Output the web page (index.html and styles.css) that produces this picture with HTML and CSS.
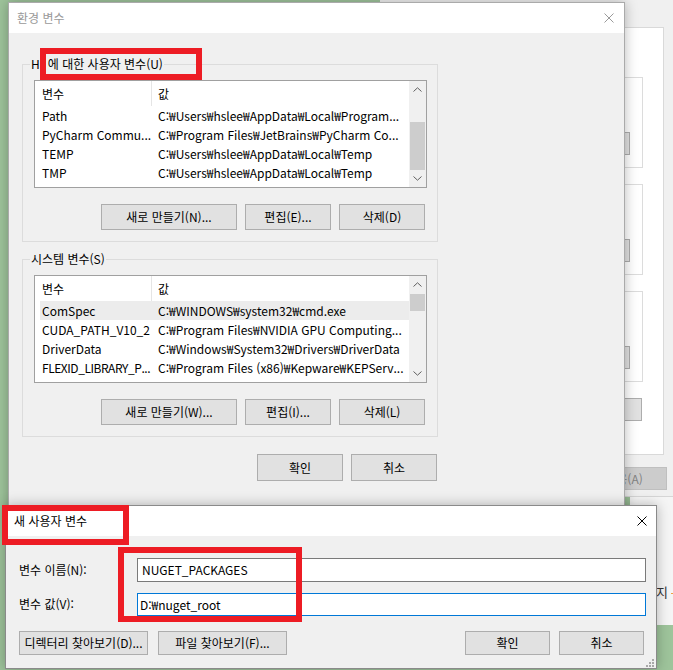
FILE: index.html
```html
<!DOCTYPE html>
<html lang="ko">
<head>
<meta charset="utf-8">
<title>환경 변수</title>
<link rel="stylesheet" href="styles.css">
</head>
<body>
<div class="desktop">

  <div class="win bgwin">
    <div class="tabpanel">
      <div class="gbox"><span class="btn small"></span></div>
      <div class="gbox"><span class="btn small"></span></div>
      <div class="gbox"><span class="btn small"></span></div>
      <span class="btn wide">환경 변수(N)...</span>
    </div>
    <span class="btn apply">적용(A)</span>
  </div>

  <div class="win explorer">
    <span class="ex-text">지</span><span class="ex-dash"></span>
  </div>

  <div class="win dialog main">
    <div class="titlebar inactive">
      <span class="title">환경 변수</span>
      <svg class="close" width="10" height="10" viewBox="0 0 10 10"><path d="M0.5 0.5L9.5 9.5M9.5 0.5L0.5 9.5" stroke="#9a9a9a" stroke-width="1" fill="none"/></svg>
    </div>
    <div class="main-body">
      <fieldset class="group first">
        <legend>H<span class="hidden-name"></span>에 대한 사용자 변수(U)</legend>
        <div class="list">
          <div class="list-main">
            <div class="list-head"><span class="c1">변수</span><span class="c2">값</span></div>
            <div class="row"><span class="c1">Path</span><span class="c2">C:₩Users₩hslee₩AppData₩Local₩Program...</span></div>
            <div class="row"><span class="c1">PyCharm Commu...</span><span class="c2">C:₩Program Files₩JetBrains₩PyCharm Co...</span></div>
            <div class="row"><span class="c1">TEMP</span><span class="c2">C:₩Users₩hslee₩AppData₩Local₩Temp</span></div>
            <div class="row"><span class="c1">TMP</span><span class="c2">C:₩Users₩hslee₩AppData₩Local₩Temp</span></div>
          </div>
          <div class="vscroll">
            <div class="arrow"><svg width="9" height="5" viewBox="0 0 9 5"><path d="M0.5 4.5L4.5 0.8L8.5 4.5" stroke="#606060" fill="none"/></svg></div>
            <div class="track"><div class="thumb thumb-user"></div></div>
            <div class="arrow"><svg width="9" height="5" viewBox="0 0 9 5"><path d="M0.5 0.5L4.5 4.2L8.5 0.5" stroke="#606060" fill="none"/></svg></div>
          </div>
        </div>
        <div class="btnrow">
          <span class="btn b-new">새로 만들기(N)...</span>
          <span class="btn b-edit">편집(E)...</span>
          <span class="btn b-del">삭제(D)</span>
        </div>
      </fieldset>

      <fieldset class="group second">
        <legend>시스템 변수(S)</legend>
        <div class="list">
          <div class="list-main">
            <div class="list-head"><span class="c1">변수</span><span class="c2">값</span></div>
            <div class="row selected"><span class="c1">ComSpec</span><span class="c2">C:₩WINDOWS₩system32₩cmd.exe</span></div>
            <div class="row"><span class="c1">CUDA_PATH_V10_2</span><span class="c2">C:₩Program Files₩NVIDIA GPU Computing...</span></div>
            <div class="row"><span class="c1">DriverData</span><span class="c2">C:₩Windows₩System32₩Drivers₩DriverData</span></div>
            <div class="row"><span class="c1 tight">FLEXID_LIBRARY_P...</span><span class="c2">C:₩Program Files (x86)₩Kepware₩KEPServ...</span></div>
          </div>
          <div class="vscroll">
            <div class="arrow"><svg width="9" height="5" viewBox="0 0 9 5"><path d="M0.5 4.5L4.5 0.8L8.5 4.5" stroke="#606060" fill="none"/></svg></div>
            <div class="track"><div class="thumb thumb-sys"></div></div>
            <div class="arrow"><svg width="9" height="5" viewBox="0 0 9 5"><path d="M0.5 0.5L4.5 4.2L8.5 0.5" stroke="#606060" fill="none"/></svg></div>
          </div>
        </div>
        <div class="btnrow">
          <span class="btn b-new">새로 만들기(W)...</span>
          <span class="btn b-edit">편집(I)...</span>
          <span class="btn b-del">삭제(L)</span>
        </div>
      </fieldset>

      <div class="okrow">
        <span class="btn b-ok">확인</span>
        <span class="btn b-ok">취소</span>
      </div>
    </div>
  </div>

  <div class="win dialog newvar">
    <div class="titlebar">
      <span class="title">새 사용자 변수</span>
      <svg class="close" width="10" height="10" viewBox="0 0 10 10"><path d="M0.5 0.5L9.5 9.5M9.5 0.5L0.5 9.5" stroke="#000" stroke-width="1" fill="none"/></svg>
    </div>
    <div class="nv-body">
      <div class="field">
        <label class="flabel">변수 이름(N):</label>
        <div class="input">NUGET_PACKAGES</div>
      </div>
      <div class="field">
        <label class="flabel">변수 값(V):</label>
        <div class="input focused">D:₩nuget_root</div>
      </div>
      <div class="nv-buttons">
        <span class="btn b-browse">디렉터리 찾아보기(D)...</span>
        <span class="btn b-browse">파일 찾아보기(F)...</span>
        <span class="spacer"></span>
        <span class="btn b-ok2">확인</span>
        <span class="btn b-ok2">취소</span>
      </div>
    </div>
    <svg class="grip" width="9" height="9" viewBox="0 0 9 9"><g fill="#a8a8a8"><rect x="7" y="1" width="2" height="2"/><rect x="4" y="4" width="2" height="2"/><rect x="7" y="4" width="2" height="2"/><rect x="1" y="7" width="2" height="2"/><rect x="4" y="7" width="2" height="2"/><rect x="7" y="7" width="2" height="2"/></g></svg>
  </div>

  <div class="mark mark1"></div>
  <div class="mark mark2"></div>
  <div class="mark mark3"></div>
</div>
</body>
</html>
```

FILE: styles.css
```css
* { box-sizing: border-box; }
html, body { margin: 0; padding: 0; }
body {
  font-family: "Noto Sans CJK KR", "Noto Sans", sans-serif;
  font-size: 12px;
  color: #000;
}
.desktop {
  position: relative;
  width: 673px;
  height: 670px;
  overflow: hidden;
  background: #9ec49b;
}
.win { position: absolute; }

/* background system properties window */
.bgwin {
  left: 380px;
  top: -40px;
  width: 310px;
  height: 537px;
  background: #f0f0f0;
  border-bottom: 1px solid #d6d6d6;
  padding: 67px 26px 0 30px;
  display: flex;
  flex-direction: column;
}
.tabpanel {
  height: 428px;
  background: #fff;
  border: 1px solid #d9d9d9;
  padding-top: 49px;
  display: flex;
  flex-direction: column;
  gap: 16px;
}
.gbox {
  height: 91px;
  margin-right: 20px;
  border: 1px solid #dcdcdc;
  display: flex;
  justify-content: flex-end;
  align-items: flex-end;
  padding: 0 12px 12px 0;
}
.btn {
  display: flex;
  align-items: center;
  justify-content: center;
  background: #e1e1e1;
  border: 1px solid #adadad;
  white-space: nowrap;
  line-height: 16px;
}
.btn.small { width: 80px; height: 23px; }
.btn.wide { width: 140px; height: 23px; align-self: flex-end; margin-right: 21px; }
.btn.apply {
  width: 86px; height: 23px;
  align-self: flex-end;
  margin-top: 12px;
  margin-right: -3px;
  background: #cccccc;
  border-color: #bfbfbf;
  color: #838383;
}

/* explorer window bottom right */
.explorer {
  left: 630px;
  top: 497px;
  width: 60px;
  height: 128px;
  background: #f5f5f5;
  padding: 87px 0 0 26px;
  display: flex;
  align-items: flex-start;
  gap: 3px;
}
.ex-text { font-size: 13px; line-height: 16px; color: #333; }
.ex-dash { width: 5px; height: 1px; background: #f0a040; margin-top: 9px; }

/* dialogs */
.dialog {
  background: #f0f0f0;
  box-shadow: 0 0 12px rgba(0,0,0,0.28);
}
.main {
  left: 8px;
  top: 2px;
  width: 617px;
  height: 530px;
  border: 1px solid #aaaaaa;
}
.titlebar {
  height: 30px;
  background: #fff;
  display: flex;
  align-items: center;
  justify-content: space-between;
  padding: 0 10px 0 8px;
}
.titlebar .title { line-height: 16px; }
.titlebar.inactive .title { color: #999; }

.main-body {
  padding: 0 0 0 13px;
  display: flex;
  flex-direction: column;
}
.group {
  width: 416px;
  margin: 0;
  border: 1px solid #dcdcdc;
  padding: 8px 0 11px 11px;
  min-width: 0;
}
.group.first { margin-top: 23px; }
.group.second { margin-top: 9px; }
.group legend {
  padding: 0 1px;
  margin-left: -4px;
  line-height: 16px;
}
.hidden-name { display: inline-block; width: 8px; }

.list {
  width: 393px;
  height: 108px;
  border: 1px solid #a0a0a0;
  background: #fff;
  display: flex;
}
.list-main {
  flex: 1;
  overflow: hidden;
}
.list-head, .row {
  display: grid;
  grid-template-columns: 117px 1fr;
  white-space: nowrap;
}
.list-head { height: 25px; align-items: center; }
.list-head .c1 { border-right: 1px solid #e5e5e5; height: 25px; display: flex; align-items: center; }
.row { height: 19px; align-items: center; line-height: 19px; }
.c1 { padding-left: 7px; overflow: hidden; }
.c2 { padding-left: 6px; overflow: hidden; }
.c1.tight { letter-spacing: -0.45px; }
.row.selected { background: linear-gradient(to right, transparent 5px, #ececec 5px); }

.vscroll {
  width: 17px;
  background: #f0f0f0;
  display: flex;
  flex-direction: column;
}
.arrow {
  height: 17px;
  display: flex;
  align-items: center;
  justify-content: center;
}
.track {
  flex: 1;
  display: flex;
  flex-direction: column;
  padding: 0 1px;
}
.thumb { background: #cdcdcd; }
.thumb-user { margin-top: auto; height: 48px; }
.thumb-sys { margin-top: 1px; height: 17px; }

.btnrow {
  display: flex;
  gap: 8px;
  margin-top: 16px;
  padding-left: 67px;
}
.btnrow .btn { height: 26px; }
.b-new { width: 136px; }
.b-edit, .b-del { width: 86px; }

.okrow {
  display: flex;
  gap: 8px;
  margin-top: 17px;
  padding-left: 235px;
}
.b-ok { width: 86px; height: 27px; }

/* new variable dialog */
.newvar {
  left: 5px;
  top: 505px;
  width: 652px;
  height: 164px;
  border: 1px solid #8a8a8a;
}
.newvar .titlebar { padding-right: 9px; }
.nv-body {
  padding: 22px 10px 0 13px;
  display: flex;
  flex-direction: column;
}
.field {
  display: flex;
  align-items: center;
  height: 24px;
  margin-bottom: 10px;
}
.flabel { width: 118px; line-height: 16px; }
.input {
  flex: 1;
  height: 24px;
  border: 1px solid #7a7a7a;
  background: #fff;
  padding-left: 4px;
  line-height: 22px;
}
.input.focused { border-color: #0078d7; height: 23px; line-height: 21px; padding-left: 2px; }
.nv-buttons {
  display: flex;
  margin-top: 5px;
  padding-right: 2px;
}
.b-browse { width: 129px; height: 24px; margin-right: 10px; }
.spacer { flex: 1; }
.b-ok2 { width: 85px; height: 24px; margin-left: 9px; }
.grip { position: absolute; right: 2px; bottom: 1px; }

/* red annotation boxes */
.mark {
  position: absolute;
  border: 6px solid #ed1c24;
}
.mark1 { left: 40px; top: 48px; width: 162px; height: 32px; }
.mark2 { left: 2px; top: 505px; width: 127px; height: 40px; }
.mark3 { left: 118px; top: 547px; width: 184px; height: 75px; }
```
